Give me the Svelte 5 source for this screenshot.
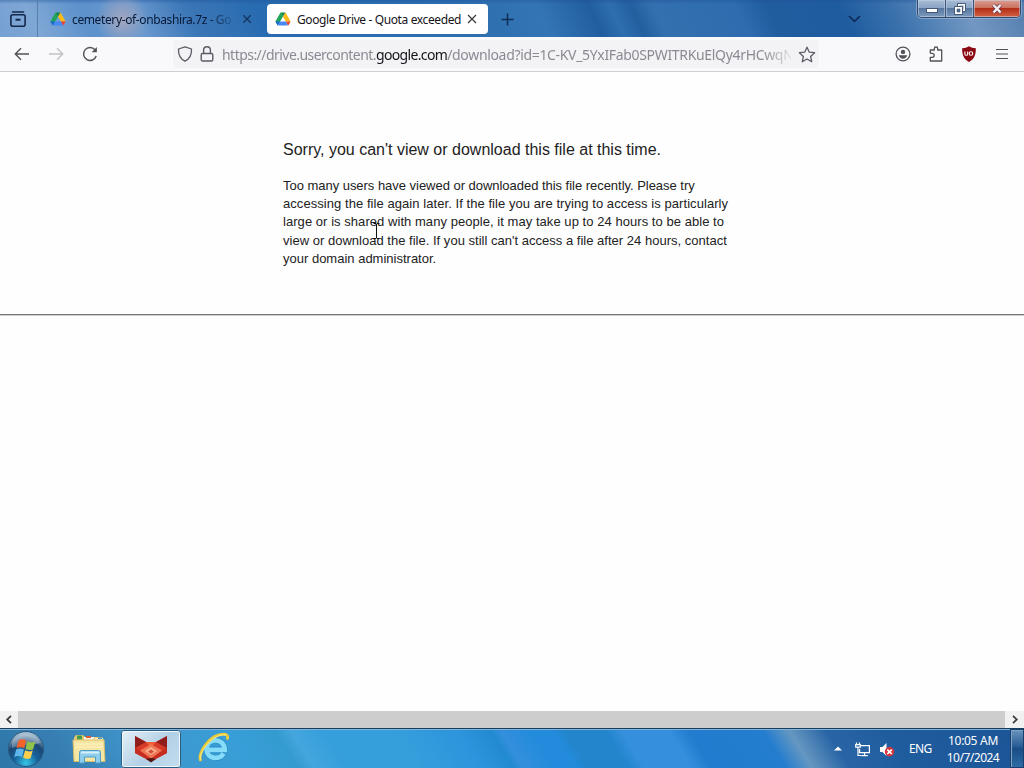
<script>
  const lines = [
    'Too many users have viewed or downloaded this file recently. Please try',
    'accessing the file again later. If the file you are trying to access is particularly',
    'large or is shared with many people, it may take up to 24 hours to be able to',
    "view or download the file. If you still can't access a file after 24 hours, contact",
    'your domain administrator.'
  ];
</script>

{#snippet driveIcon()}
  <svg class="drive" width="16" height="14" viewBox="0 0 16 14">
    <path d="M5.5 0.5 0.4 9.4l2.4 4L8 4.6Z" fill="#20a45a" />
    <path d="M5.5 0.5h5L8 4.8Z" fill="#188545" />
    <path d="M10.5 0.5 8 4.7l2.9 4.8h4.8Z" fill="#fdbb16" />
    <path d="M0.4 9.4h4.9l-2.5 4Z" fill="#1967d2" />
    <path d="M5.3 9.4h5.5l2.5 4H2.8Z" fill="#4688f4" />
    <path d="M10.8 9.4h4.9l-2.4 4Z" fill="#ea4335" />
  </svg>
{/snippet}

<div class="screen">
  <header class="tab-bar">
    <div class="view-button">
      <svg width="18" height="18" viewBox="0 0 18 18" fill="none" stroke="#15284a" stroke-width="1.6">
        <path d="M3.5 2h11" stroke-linecap="round" />
        <rect x="1.9" y="4.8" width="14.2" height="11.4" rx="2" />
        <path d="M6.5 9.7h5" stroke-width="2" />
      </svg>
    </div>
    <div class="tab">
      {@render driveIcon()}
      <span class="tab-title faded">cemetery-of-onbashira.7z - Go</span>
      <svg class="tab-close" width="10" height="10" viewBox="0 0 10 10" stroke="#17345f" stroke-width="1.3">
        <path d="M1.3 1.3l7.4 7.4M8.7 1.3 1.3 8.7" />
      </svg>
    </div>
    <div class="tab active">
      {@render driveIcon()}
      <span class="tab-title">Google Drive - Quota exceeded</span>
      <svg class="tab-close" width="10" height="10" viewBox="0 0 10 10" stroke="#333" stroke-width="1.1">
        <path d="M1 1l8 8M9 1 1 9" />
      </svg>
    </div>
    <svg class="new-tab" width="13" height="13" viewBox="0 0 13 13" stroke="#102c59" stroke-width="1.5">
      <path d="M6.5 0.5v12M0.5 6.5h12" />
    </svg>
    <svg class="all-tabs" width="13" height="8" viewBox="0 0 13 8" fill="none" stroke="#0d2956" stroke-width="1.6">
      <path d="M1 1l5.5 5.3L12 1" />
    </svg>
    <div class="window-controls">
      <div class="control">
        <svg width="14" height="12" viewBox="0 0 14 12">
          <rect x="1.5" y="5.5" width="11" height="4" fill="#fff" stroke="#45597a" />
        </svg>
      </div>
      <div class="control">
        <svg width="14" height="12" viewBox="0 0 14 12">
          <path d="M4.5 0.5h8v8h-8z" fill="#fff" stroke="#45597a" />
          <path d="M6.5 2.5h4v4h-4z" fill="#7c93b5" />
          <path d="M1.5 3.5h8v8h-8z" fill="#fff" stroke="#45597a" />
          <path d="M4 6h3v3H4z" fill="#536c95" stroke="#45597a" stroke-width=".6" />
        </svg>
      </div>
      <div class="control close">
        <svg width="14" height="12" viewBox="0 0 14 12">
          <path d="M3.5 2l7 7.5M10.5 2l-7 7.5" stroke="#64374a" stroke-width="4" />
          <path d="M3.5 2l7 7.5M10.5 2l-7 7.5" stroke="#f4f0f1" stroke-width="2.5" />
        </svg>
      </div>
    </div>
  </header>

  <nav class="toolbar">
    <svg class="back" width="16" height="14" viewBox="0 0 16 14" fill="none" stroke="#515158" stroke-width="1.4">
      <path d="M15 7H1.5M7 1.3 1.3 7 7 12.7" />
    </svg>
    <svg class="forward" width="16" height="14" viewBox="0 0 16 14" fill="none" stroke="#c1c1c7" stroke-width="1.4">
      <path d="M1 7h13.5M9 1.3 14.7 7 9 12.7" />
    </svg>
    <svg class="reload" width="16" height="16" viewBox="0 0 16 16" fill="none" stroke="#515158" stroke-width="1.4">
      <path d="M14.2 10a6.5 6.5 0 1 1-1.2-6.2" />
      <path d="M14.9 1v5.3H9.6Z" fill="#515158" stroke="none" />
    </svg>
    <div class="url-bar">
      <svg class="shield" width="16" height="16" viewBox="0 0 16 16" fill="none" stroke="#5b5b66" stroke-width="1.3">
        <path d="M8 .9 14.5 3c.3 5.3-1.4 9.6-6.5 12.2C2.9 12.6 1.2 8.3 1.5 3Z" stroke-linejoin="round" />
      </svg>
      <svg class="lock" width="14" height="16" viewBox="0 0 14 16" fill="none" stroke="#5b5b66" stroke-width="1.4">
        <rect x="1.2" y="7.5" width="11.6" height="7.5" rx="1.5" />
        <path d="M3.6 7.5V4.2a3.4 3.4 0 0 1 6.8 0v3.3" />
      </svg>
      <div class="url"><span class="host">https://drive.usercontent.</span><b>google.com</b>/download?id=1C-KV_5YxIFab0SPWITRKuElQy4rHCwqN</div>
      <svg class="star" width="18" height="17" viewBox="0 0 18 17" fill="none" stroke="#5b5b66" stroke-width="1.3" stroke-linejoin="round">
        <path d="M9 1.2l2.2 4.9 5.4.6-4 3.7 1.1 5.3L9 13l-4.7 2.7 1.1-5.3-4-3.7 5.4-.6Z" />
      </svg>
    </div>
    <div class="actions">
      <svg width="16" height="16" viewBox="0 0 16 16">
        <circle cx="8" cy="8" r="6.9" fill="none" stroke="#515158" stroke-width="1.3" />
        <circle cx="8" cy="5.9" r="2.2" fill="#515158" />
        <path d="M3.8 9.3h8.4c-.6 2.3-2.2 3.5-4.2 3.5s-3.6-1.2-4.2-3.5Z" fill="#515158" />
      </svg>
      <svg width="16" height="16" viewBox="0 0 16 16" fill="none" stroke="#515158" stroke-width="1.3" stroke-linejoin="round">
        <path d="M2.3 7V4h4V2.7a1.7 1.7 0 0 1 3.4 0V4h4v11H2.3v-3.7h1.9a2 2 0 0 0 0-4Z" />
      </svg>
      <svg width="16" height="16" viewBox="0 0 16 16">
        <path d="M8 .3c2 1.2 4 1.8 6.8 2C15 8.5 13.5 13 8 15.9 2.5 13 1 8.5 1.2 2.3 4 2.1 6 1.5 8 .3Z" fill="#8b0712" />
        <path d="M3.9 5.5v2.4a1.4 1.4 0 0 0 2.8 0V5.5" fill="none" stroke="#fff" stroke-width="1.1" />
        <circle cx="10" cy="7.5" r="1.8" fill="none" stroke="#fff" stroke-width="1.1" />
      </svg>
      <svg width="16" height="16" viewBox="0 0 16 16" stroke="#515158" stroke-width="1.2">
        <path d="M2 3.5h12M2 8h12M2 12.5h12" />
      </svg>
    </div>
  </nav>

  <main>
    <section class="message">
      <h1>Sorry, you can't view or download this file at this time.</h1>
      <p>
        {#each lines as line, i}
          <span class="line line-{i}">{line}</span>
        {/each}
      </p>
    </section>
    <hr />
    <svg class="cursor" width="7" height="16" viewBox="0 0 7 16" fill="none" stroke="#111">
      <path d="M.5.5H3L3.5 1 4 .5h2.5M3.5 1v14M.5 15.5H3l.5-.5.5.5h2.5" />
    </svg>
  </main>

  <div class="scrollbar">
    <svg width="18" height="17" viewBox="0 0 18 17" fill="none" stroke="#404040" stroke-width="1.8">
      <path d="M11 4.8 7.2 8.5 11 12.2" />
    </svg>
    <div class="thumb"></div>
    <svg width="19" height="17" viewBox="0 0 19 17" fill="none" stroke="#404040" stroke-width="1.8">
      <path d="M8 4.8l3.8 3.7L8 12.2" />
    </svg>
  </div>

  <footer class="taskbar">
    <svg class="start" width="38" height="38" viewBox="0 0 38 38">
      <defs>
        <radialGradient id="orb" cx=".5" cy=".9" r=".85">
          <stop offset="0" stop-color="#35c6e6" />
          <stop offset=".4" stop-color="#16629a" />
          <stop offset=".7" stop-color="#1b4674" />
          <stop offset="1" stop-color="#a3bfd2" />
        </radialGradient>
      </defs>
      <circle cx="19" cy="19" r="17.5" fill="url(#orb)" stroke="#27577c" />
      <path d="M5 13C9 1 29 1 33 13c-9 3-19 1-28 5Z" fill="#fff" opacity=".3" />
      <path d="M11.5 10.5c2.800-1.800 5-1.700 7.700 0l-1.900 7.700c-2.700-1.400-5-1.400-7.700 0Z" fill="#f2632b" />
      <path d="M20.300 11.300c2.800 1.500 5 1.500 8 .2l-2.100 7.700c-2.800 1.300-5 1.200-7.700-.2Z" fill="#91c34b" />
      <path d="M9.200 19.500c2.700-1.500 5-1.400 7.700 0l-2 7.500c-2.700-1.400-5-1.300-7.700.2Z" fill="#5fb5ec" />
      <path d="M18.100 20.300c2.700 1.500 5 1.500 7.700.2L23.700 28c-2.700 1.300-5 1.100-7.600-.2Z" fill="#fdcf4c" />
    </svg>
    <svg class="explorer" width="34" height="32" viewBox="0 0 34 32">
      <path d="M2 4.5 4 2h7l2 2h17l2 3v21H2Z" fill="#e6c66e" />
      <path d="M5 2.5h5v4H5z" fill="#3e9c4c" />
      <path d="M12 4h10v4H12z" fill="#f8f4df" />
      <path d="M14 3h5v2h-5z" fill="#d95b36" />
      <path d="M23 5h8v3h-8z" fill="#f7f0ce" />
      <path d="M26 4.5h4V6h-4z" fill="#4295c9" />
      <path d="M1 7h31l1 21.5H2Z" fill="#f6e6a4" stroke="#d9bd69" />
      <path d="M3 11h28M3 14h28" stroke="#fff3c3" />
      <path d="M7.500 30V19.500q0-2 2-2h17q2 0 2 2V30h-5v-6h-11v6Z" fill="#8fcdec" stroke="#4d9dc9" />
      <path d="M9 19.500h18" stroke="#d3effa" stroke-width="2" />
    </svg>
    <div class="task active">
      <svg width="34" height="28" viewBox="0 0 34 28">
        <path d="M1 1l11 6h10l11-6v17L17 26.5 1 18Z" fill="#d63a28" />
        <path d="M1 1l11 6-11 6Z" fill="#8e1d1b" />
        <path d="M33 1 22 7l11 6Z" fill="#8e1d1b" />
        <path d="M12 7h10l-5 6Z" fill="#f05d36" />
        <path d="M1 12l16 12 16-12v6l-16 8.5L1 18Z" fill="#c52d22" />
        <path d="M17 9 6 15.5l11 8 11-8Z" fill="#ef7654" />
        <path d="M17 12l-6 4 6 4 6-4Z" fill="#f9b08d" />
        <path d="M17 14.5l-3 2 3 2.2 3-2.2Z" fill="#d44936" />
        <path d="M12 24l5 3.5 5-3.5-5-1Z" fill="#511717" />
      </svg>
    </div>
    <svg class="ie" width="34" height="32" viewBox="0 0 34 32" fill="none">
      <path d="M26.5 21.5c-4.3 7.5-17 5.2-17-4.5 0-11.5 17.3-12 18.2.8H11" stroke="#2588c4" stroke-width="6" />
      <path d="M26.5 21.5c-4.3 7.5-17 5.2-17-4.5 0-11.5 17.3-12 18.2.8H11" stroke="#86dcf8" stroke-width="4.8" />
      <path d="M4 29C-1 22 14 0 29 2.5c2 .7 2.3 3 .8 5" stroke="#e9cb3c" stroke-width="2.8" />
      <path d="M3.5 27.5C2 19 17 1 29 2.8" stroke="#fff19a" stroke-width=".8" />
    </svg>

    <div class="tray">
      <svg class="tray-arrow" width="8" height="5" viewBox="0 0 8 5">
        <path d="M0 4.5 4 .5l4 4Z" fill="#fff" />
      </svg>
      <svg class="network" width="16" height="15" viewBox="0 0 16 15" fill="none" stroke="#fff" stroke-width="1.2">
        <path d="M6 3.6h8.4v7H4.6V7M9.5 10.6v2.7M6.3 13.6h6.5" />
        <path d="M1.5.5v2M4.5.5v2M.7 2.7h4.6v2.5H.7zM3 5.5v8h3" />
      </svg>
      <svg class="volume" width="16" height="15" viewBox="0 0 16 15">
        <path d="M0 5h2.5L6.500 1v13l-4-4H0Z" fill="#fff" />
        <circle cx="9.500" cy="9.800" r="4.700" fill="#d8343b" />
        <path d="M7.300 7.600l4.400 4.400M11.700 7.600 7.300 12" stroke="#fff" stroke-width="1.7" />
      </svg>
      <span class="lang">ENG</span>
      <div class="clock">
        <span>10:05 AM</span>
        <span class="date">10/7/2024</span>
      </div>
      <div class="show-desktop"></div>
    </div>
  </footer>
</div>

<style>
  :global(body) {
    margin: 0;
    overflow: hidden;
  }

  .screen {
    width: 1024px;
    height: 768px;
    display: flex;
    flex-direction: column;
    background: #fefefe;
    font-family: "Noto Sans", "Open Sans", sans-serif;
    overflow: hidden;
  }

  svg {
    display: block;
    flex: none;
  }

  .tab-bar {
    height: 37px;
    flex: none;
    display: flex;
    align-items: center;
    background:
      radial-gradient(ellipse 26px 28px at 122px 20px, #a2a6be 0%, transparent 100%),
      linear-gradient(180deg, #1c4f9566 0, transparent 4px),
      linear-gradient(65deg, #75a0d2 0%, #7fa7d5 4%, #5c91cb 9%, #6a99cf 14%, #3c77b7 19%, #286bb0 26%, #2f70b1 48%, #3475b5 53%, #215e9f 58%, #2e6eaf 60%, #225f9f 62%, #3370af 64%, #2e6caf 72%, #205d9f 75%, #1f5c9f 82%, #3b72ad 87%, #7297c2 94%, #557eae 100%);
  }

  .view-button {
    width: 38px;
    height: 37px;
    padding-right: 2px;
    display: flex;
    align-items: center;
    justify-content: center;
    border-right: 1px solid #587fac;
    box-sizing: border-box;
  }

  .tab {
    width: 217px;
    height: 30px;
    margin-left: 3px;
    padding: 0 8px 0 9px;
    display: flex;
    align-items: center;
    box-sizing: border-box;
    color: #071a38;
  }

  .tab.active {
    width: 221px;
    margin-left: 9px;
    padding: 0 11px 0 8px;
    background: #fff;
    border-radius: 4px;
    color: #15141a;
  }

  .tab-title {
    flex: 1;
    margin: 2px 0 0 6px;
    font-size: 12px;
    line-height: 20px;
    letter-spacing: -0.38px;
    white-space: nowrap;
  }

  .faded {
    flex: none;
    width: 164px;
    mask-image: linear-gradient(90deg, #000 82%, transparent 102%);
  }

  .faded + .tab-close {
    margin-left: 6px;
  }

  .new-tab {
    margin: 2px 0 0 13px;
  }

  .all-tabs {
    margin-left: auto;
  }

  .window-controls {
    height: 18px;
    margin: 0 3px 0 56px;
    align-self: flex-start;
    display: flex;
    border: 1px solid #344b70;
    border-top: 0;
    border-radius: 0 0 5px 5px;
    overflow: hidden;
    box-sizing: border-box;
    box-shadow: 0 0 0 1px #a9c2df88;
  }

  .control {
    width: 27px;
    display: flex;
    align-items: center;
    justify-content: center;
    border-right: 1px solid #3e5579;
    background: linear-gradient(#a7bbd5 0%, #8ba5c6 45%, #58779f 50%, #7d9bbd 100%);
    box-shadow: inset 0 0 0 1px #c7d6e788;
  }

  .control.close {
    width: 46px;
    border-right: 0;
    background: linear-gradient(#dba093 0%, #cc725f 45%, #b52e19 50%, #d26244 100%);
  }

  .toolbar {
    height: 35px;
    flex: none;
    display: flex;
    align-items: center;
    box-sizing: border-box;
    background: #f9f9fb;
    border-bottom: 1px solid #cfcfd2;
  }

  .back {
    margin-left: 14px;
  }

  .forward {
    margin-left: 18px;
  }

  .reload {
    margin-left: 18px;
  }

  .url-bar {
    width: 646px;
    height: 28px;
    margin-left: 75px;
    padding-left: 4px;
    display: flex;
    align-items: center;
    box-sizing: border-box;
    background: #f3f3f6;
    border-radius: 4px;
  }

  .lock {
    margin-left: 7px;
  }

  .url {
    width: 569px;
    margin: 2px 0 0 8px;
    font-size: 14px;
    line-height: 22px;
    letter-spacing: -0.33px;
    color: #8a8a93;
    white-space: nowrap;
    mask-image: linear-gradient(90deg, #000 95%, transparent 101%);
  }

  .host {
    letter-spacing: -0.54px;
  }

  .url b {
    font-weight: 400;
    letter-spacing: -0.65px;
    color: #15141a;
  }

  .star {
    margin-left: 7px;
  }

  .actions {
    margin: 0 14px 0 auto;
    display: flex;
    gap: 17px;
  }

  main {
    position: relative;
    flex: 1;
    font-family: "Liberation Sans", Arial, sans-serif;
    color: #222;
  }

  .message {
    width: 460px;
    height: 174px;
    padding: 68px 0 0 283px;
  }

  h1 {
    margin: 0;
    font-size: 16px;
    font-weight: 400;
    line-height: 19px;
    white-space: nowrap;
  }

  p {
    margin: 18px 0 0;
    font-size: 13px;
    line-height: 18.2px;
  }

  .line {
    display: block;
    white-space: nowrap;
  }

  .line-0 {
    letter-spacing: -0.03px;
  }

  .line-1 {
    letter-spacing: 0.06px;
  }

  .line-2 {
    letter-spacing: 0.05px;
  }

  .line-3 {
    letter-spacing: 0.015px;
  }

  hr {
    margin: 0;
    border: 0;
    border-top: 1px solid #777;
    border-bottom: 1px solid #d0d0d0;
  }

  .cursor {
    position: absolute;
    left: 373px;
    top: 151px;
  }

  .scrollbar {
    height: 17px;
    flex: none;
    display: flex;
    background: #f1f1f1;
  }

  .thumb {
    flex: 1;
    background: #cdcdcd;
  }

  .taskbar {
    height: 40px;
    flex: none;
    display: flex;
    align-items: center;
    box-sizing: border-box;
    border-top: 1px solid #173d60;
    box-shadow: inset 0 1px #82b5d8;
    background: linear-gradient(58deg, #2d76a8 0%, #377fb2 7%, #3f96cc 15%, #389ed7 24%, #349bd0 28.5%, #44a6dd 30%, #359fdc 33%, #359fdc 40%, #2b94dc 46%, #228bd0 49%, #338fdd 50%, #228bdc 53%, #228bdc 55%, #2386cd 56%, #2386cd 60%, #358fdd 61.5%, #358fdd 66%, #217bce 68%, #247dcf 75%, #6597c1 77.5%, #2965a6 81%, #1f5c9e 87%, #1c5596 100%);
  }

  .start {
    margin-left: 7px;
  }

  .explorer {
    margin-left: 27px;
  }

  .task.active {
    width: 60px;
    height: 38px;
    margin: 1px 0 0 15px;
    display: flex;
    align-items: center;
    justify-content: center;
    box-sizing: border-box;
    border: 1px solid #f1f8fc;
    outline: 1px solid #285e83;
    outline-offset: -1px;
    border-radius: 3px;
    background: linear-gradient(135deg, #e5f0f7, #b2d0e5 55%, #c4ddef);
    box-shadow: inset 0 0 0 1px #f1f8fc;
  }

  .ie {
    margin: -2px 0 0 16px;
  }

  .tray {
    height: 39px;
    margin-left: auto;
    display: flex;
    align-items: center;
    color: #fff;
    font-size: 12px;
  }

  .network {
    margin: 2px 0 0 13px;
  }

  .volume {
    margin: 2px 0 0 9px;
  }

  .lang {
    width: 24px;
    margin: 0 0 0 13px;
    letter-spacing: -0.6px;
  }

  .clock {
    width: 54px;
    margin-left: 13px;
    display: flex;
    flex-direction: column;
    align-items: center;
    line-height: 17px;
    letter-spacing: -0.3px;
    white-space: nowrap;
  }

  .date {
    letter-spacing: -0.5px;
  }

  .show-desktop {
    width: 14px;
    height: 39px;
    margin-left: 10px;
    box-sizing: border-box;
    border: 1px solid #173e6c;
    box-shadow: inset 1px 1px #7fa3c5;
    background: linear-gradient(#6994bd, #285b94 45%, #1b4d86 50%, #2d6ba6);
  }
</style>
